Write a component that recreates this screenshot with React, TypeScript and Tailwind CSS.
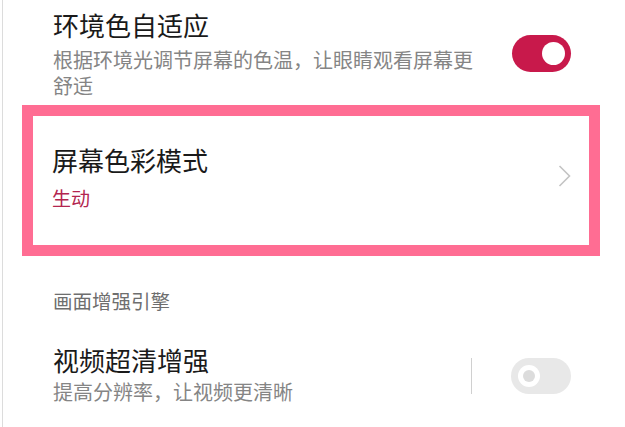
function Switch({ on }: { on: boolean }) {
  if (on) {
    return (
      <div className="flex h-[37px] w-[59px] items-center justify-end rounded-full bg-[#c8194b] pr-[6px]">
        <div className="h-[23px] w-[23px] rounded-full bg-white" />
      </div>
    );
  }
  return (
    <div className="flex h-[36px] w-[60px] items-center rounded-full bg-[#e8e8e8] pl-[7px]">
      <div className="flex h-[22px] w-[22px] items-center justify-center rounded-full bg-white">
        <div className="h-[12px] w-[12px] rounded-full bg-[#dcdcdc]" />
      </div>
    </div>
  );
}

export default function App() {
  return (
    <div className="h-[427px] w-[625px] overflow-hidden bg-white font-['Noto_Sans_CJK_SC','Noto_Sans',sans-serif]">
      <div className="ml-[2px] h-full border-l border-[#dcdcdc]">
        {/* 环境色自适应 */}
        <div className="flex items-start pl-[50px] pr-[54px]">
          <div className="flex-1">
            <div className="mt-[9px] text-[26px] leading-[32px] text-[#1a1a1a]">环境色自适应</div>
            <div className="mt-[6px] w-[430px] text-[20px] leading-[26px] text-[#858585]">
              根据环境光调节屏幕的色温，让眼睛观看屏幕更舒适
            </div>
          </div>
          <div className="mt-[35px]">
            <Switch on />
          </div>
        </div>

        {/* 屏幕色彩模式 (highlighted) */}
        <div className="ml-[19px] mt-[6px] h-[151px] w-[578px] border-[11px] border-[#ff6d93] bg-white">
          <div className="flex items-start justify-between pl-[19px] pr-[18px]">
            <div className="pt-[28px]">
              <div className="text-[26px] leading-[32px] text-[#1a1a1a]">屏幕色彩模式</div>
              <div className="mt-[9px] text-[19px] leading-[26px] text-[#b3254f]">生动</div>
            </div>
            <svg className="mt-[49px]" width="13" height="22" viewBox="0 0 13 22" fill="none">
              <polyline points="1.5,1 11.5,11 1.5,21" stroke="#c4c4c4" strokeWidth="1.6" />
            </svg>
          </div>
        </div>

        {/* 画面增强引擎 */}
        <div className="mt-[32px] pl-[50px] text-[19.5px] leading-[26px] text-[#6e6e6e]">画面增强引擎</div>

        {/* 视频超清增强 */}
        <div className="mt-[30px] flex items-start pl-[50px] pr-[54px]">
          <div className="flex-1">
            <div className="text-[26px] leading-[32px] text-[#1a1a1a]">视频超清增强</div>
            <div className="mt-[3px] text-[20px] leading-[26px] text-[#858585]">提高分辨率，让视频更清晰</div>
          </div>
          <div className="mt-[14px] flex items-center">
            <div className="mr-[39px] h-[36px] w-px bg-[#d0d0d0]" />
            <Switch on={false} />
          </div>
        </div>
      </div>
    </div>
  );
}
